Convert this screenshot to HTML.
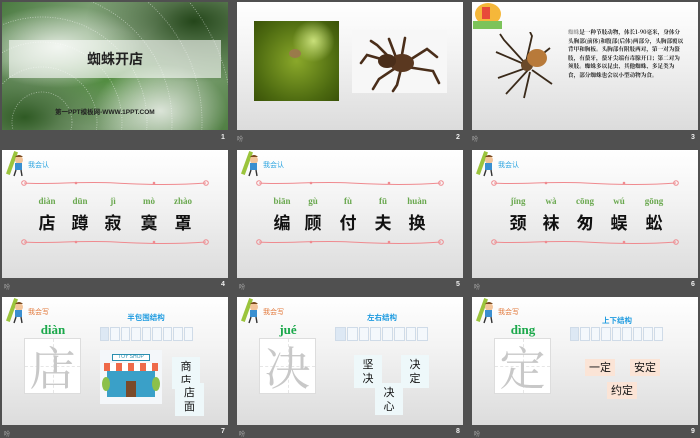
<!DOCTYPE html>
<html><head><meta charset="utf-8"><style>
*{margin:0;padding:0;box-sizing:border-box}
body{width:700px;height:438px;background:#505050;position:relative;overflow:hidden;font-family:"Liberation Sans","Noto Sans CJK SC",sans-serif}
.s{position:absolute;width:226px;height:128px;background:linear-gradient(#ffffff,#f3f3f3 40%,#dcdcdc);overflow:hidden}
.a{position:absolute}
.num{position:absolute;color:#eee;font-size:7px;font-weight:bold}
.cm{position:absolute;color:#aaa;font-size:6px}
.kid{position:absolute;left:3px;top:1px;width:20px;height:26px}
.lbl{position:absolute;left:26px;top:10px;font-size:7px;font-family:"Noto Sans CJK SC",sans-serif}
.py{position:absolute;top:46px;width:40px;margin-left:-20px;text-align:center;color:#6aa84f;font-size:9px;font-family:"Liberation Serif",serif;font-weight:bold}
.ch{position:absolute;top:59px;width:30px;margin-left:-15px;text-align:center;color:#111;font-size:17px;font-weight:bold;font-family:"Noto Sans CJK SC",sans-serif}
.wave{position:absolute;left:18px;width:190px;height:8px}
.grid{position:absolute;left:22px;top:41px;width:57px;height:56px;background:#fff;border:1px solid #ddd}
.grid:before{content:"";position:absolute;left:50%;top:0;bottom:0;border-left:1px dashed #e6e6e6}
.grid:after{content:"";position:absolute;top:50%;left:0;right:0;border-top:1px dashed #e6e6e6}
.gc{position:absolute;left:0;top:0;width:55px;height:54px;text-align:center;line-height:54px;font-size:46px;color:#c8c8c8;font-family:"Noto Serif CJK SC",serif;z-index:1}
.pyb{position:absolute;top:25px;width:60px;margin-left:-30px;text-align:center;color:#1aa84a;font-size:13px;font-family:"Liberation Serif",serif;font-weight:bold}
.tt{position:absolute;top:15px;width:70px;margin-left:-35px;text-align:center;color:#1e9be0;font-size:7.5px;font-weight:bold;font-family:"Noto Sans CJK SC",sans-serif}
.strip{position:absolute;left:98px;top:30px;width:93px;height:14px;display:flex;gap:1px}
.strip i{flex:1;background:#f4f8fc;border:1px solid #cfdbe8}
.strip i:first-child{background:#dde8f4}
.card{position:absolute;background:#eef8fa;font-size:11px;color:#111;text-align:center;line-height:14px;font-family:"Noto Sans CJK SC",sans-serif;padding-top:2px}
.pc{position:absolute;background:#fbe4d6;font-size:11px;color:#111;text-align:center;line-height:17px;font-family:"Noto Sans CJK SC",sans-serif;width:30px;height:17px}
</style></head><body>

<svg width="0" height="0" style="position:absolute"><defs>
<g id="wv"><path d="M4 4 C30 6 60 2 95 4 S160 6 186 4" stroke="#ef8a8f" stroke-width="1" fill="none"/><circle cx="4" cy="4" r="2.3" fill="none" stroke="#ef8a8f"/><circle cx="186" cy="4" r="2.3" fill="none" stroke="#ef8a8f"/><circle cx="56" cy="4" r="1.3" fill="#ef8a8f"/><circle cx="134" cy="4" r="1.3" fill="#ef8a8f"/></g>
<g id="kd"><rect x="5" y="0" width="4" height="24" transform="rotate(20 7 12)" fill="#9bc43c"/><circle cx="14" cy="9" r="4" fill="#f2c49a"/><path d="M10 6 q4 -4 8 0" fill="#7a4a1e"/><rect x="10" y="12" width="7" height="7" fill="#3a8fd0"/><path d="M11 19 l-2 6 M16 19 l1 6" stroke="#333" stroke-width="1.4"/></g>
</defs></svg>

<!-- Slide 1 -->
<div class="s" style="left:2px;top:2px;background:radial-gradient(ellipse at 25% 35%,#dfe8dc 0,transparent 35%),radial-gradient(ellipse at 70% 85%,#dbe4d8 0,transparent 30%),radial-gradient(ellipse at 85% 15%,#24461a 0,transparent 40%),radial-gradient(ellipse at 10% 90%,#2f5a24 0,transparent 35%),radial-gradient(ellipse at 45% 60%,#4e8a3c 0,transparent 45%),linear-gradient(135deg,#4a7a40,#a9c2a2 50%,#4f7e42)">
<svg class="a" style="left:0;top:0" width="226" height="128"><g fill="none" stroke="#fff" stroke-opacity=".5" stroke-width=".8" stroke-dasharray="1 1.5"><circle cx="40" cy="120" r="30"/><circle cx="40" cy="120" r="55"/><circle cx="40" cy="120" r="80"/><circle cx="40" cy="120" r="105"/><circle cx="40" cy="120" r="130"/><circle cx="40" cy="120" r="160"/><circle cx="40" cy="120" r="190"/></g></svg>
<div class="a" style="left:7px;top:38px;width:212px;height:38px;background:rgba(255,255,255,.6)"></div>
<div class="a" style="left:7px;top:47px;width:212px;text-align:center;font-size:14px;font-weight:bold;color:#222;font-family:'Noto Sans CJK SC',sans-serif">蜘蛛开店</div>
<div class="a" style="left:53px;top:104px;font-size:6.5px;font-weight:bold;color:#222">第一PPT模板网-WWW.1PPT.COM</div>
</div>
<div class="num" style="left:221px;top:134px">1</div>

<!-- Slide 2 -->
<div class="s" style="left:237px;top:2px">
<div class="a" style="left:17px;top:19px;width:85px;height:80px;background:radial-gradient(circle at 70% 25%,#c9e07a 0,transparent 25%),radial-gradient(circle at 50% 50%,#8aa82a,#4d6a10 70%,#3a5208)"></div>
<div class="a" style="left:52px;top:47px;width:12px;height:9px;border-radius:50%;background:#9a7a4a"></div>
<div class="a" style="left:115px;top:28px;width:95px;height:63px;background:#f7f7f7"></div>
<svg class="a" style="left:120px;top:33px" width="85" height="58"><g stroke="#4a2e1a" stroke-width="2.6" fill="none" stroke-linecap="round"><path d="M38 28 L10 20 L4 28"/><path d="M38 28 L20 10 L14 6"/><path d="M40 25 L32 4"/><path d="M44 25 L48 3"/><path d="M48 28 L70 14 L80 22"/><path d="M50 32 L76 36 L82 48"/><path d="M44 34 L40 50 L36 56"/><path d="M40 32 L22 44 L16 54"/></g><ellipse cx="45" cy="28" rx="12" ry="9" fill="#5a3820"/><ellipse cx="30" cy="26" rx="9" ry="7" fill="#4a2e1a"/></svg>
</div>
<div class="num" style="left:456px;top:134px">2</div>
<div class="cm" style="left:237px;top:134px">吩</div>

<!-- Slide 3 -->
<div class="s" style="left:472px;top:2px">
<div class="a" style="left:3px;top:1px;width:26px;height:22px;border-radius:50%;background:#f5b73a"></div>
<div class="a" style="left:10px;top:5px;width:8px;height:12px;background:#e84a3a"></div>
<div class="a" style="left:1px;top:19px;width:29px;height:8px;background:#7cc35a"></div>
<svg class="a" style="left:22px;top:30px" width="60" height="68"><g stroke="#3a2a1a" stroke-width="1.8" fill="none"><path d="M30 30 L10 8 L6 2"/><path d="M30 32 L2 20"/><path d="M32 30 L38 4 L36 0"/><path d="M36 32 L56 16"/><path d="M34 38 L12 62"/><path d="M32 36 L4 46"/><path d="M38 38 L58 52"/><path d="M36 40 L30 66"/></g><circle cx="33" cy="33" r="6" fill="#6a4a2a"/><ellipse cx="43" cy="26" rx="10" ry="9" fill="#b87a3a"/></svg>
<div class="a" style="left:96px;top:26px;width:116px;font-size:5.6px;line-height:8.6px;color:#222;font-weight:bold;font-family:'Noto Serif CJK SC',serif"><span style="color:#999">蜘蛛</span>是一种节肢动物，体长1-90毫米，身体分头胸部(前体)和腹部(后体)两部分，头胸部覆以背甲和胸板。头胸部有附肢两对，第一对为螯肢，有螯牙，螯牙尖端有毒腺开口；第二对为须肢。蜘蛛多以昆虫、其他蜘蛛、多足类为食，部分蜘蛛也会以小型动物为食。</div>
</div>
<div class="num" style="left:691px;top:134px">3</div>
<div class="cm" style="left:472px;top:134px">吩</div>

<!-- Slides 4-6 -->
<div class="s" style="left:2px;top:150px">
<svg class="kid" viewBox="0 0 20 26"><use href="#kd"/></svg><div class="lbl" style="color:#29a3e0">我会认</div>
<svg class="wave" style="top:29px" viewBox="0 0 190 8"><use href="#wv"/></svg>
<div class="py" style="left:45px">diàn</div><div class="py" style="left:78px">dūn</div><div class="py" style="left:111px">jì</div><div class="py" style="left:147px">mò</div><div class="py" style="left:181px">zhào</div>
<div class="ch" style="left:45px">店</div><div class="ch" style="left:78px">蹲</div><div class="ch" style="left:111px">寂</div><div class="ch" style="left:147px">寞</div><div class="ch" style="left:181px">罩</div>
<svg class="wave" style="top:88px" viewBox="0 0 190 8"><use href="#wv"/></svg>
</div>
<div class="num" style="left:221px;top:281px">4</div><div class="cm" style="left:4px;top:282px">吩</div>

<div class="s" style="left:237px;top:150px">
<svg class="kid" viewBox="0 0 20 26"><use href="#kd"/></svg><div class="lbl" style="color:#29a3e0">我会认</div>
<svg class="wave" style="top:29px" viewBox="0 0 190 8"><use href="#wv"/></svg>
<div class="py" style="left:45px">biān</div><div class="py" style="left:76px">gù</div><div class="py" style="left:111px">fù</div><div class="py" style="left:146px">fū</div><div class="py" style="left:180px">huàn</div>
<div class="ch" style="left:45px">编</div><div class="ch" style="left:76px">顾</div><div class="ch" style="left:111px">付</div><div class="ch" style="left:146px">夫</div><div class="ch" style="left:180px">换</div>
<svg class="wave" style="top:88px" viewBox="0 0 190 8"><use href="#wv"/></svg>
</div>
<div class="num" style="left:456px;top:281px">5</div><div class="cm" style="left:239px;top:282px">吩</div>

<div class="s" style="left:472px;top:150px">
<svg class="kid" viewBox="0 0 20 26"><use href="#kd"/></svg><div class="lbl" style="color:#29a3e0">我会认</div>
<svg class="wave" style="top:29px" viewBox="0 0 190 8"><use href="#wv"/></svg>
<div class="py" style="left:46px">jǐng</div><div class="py" style="left:79px">wà</div><div class="py" style="left:113px">cōng</div><div class="py" style="left:147px">wú</div><div class="py" style="left:182px">gōng</div>
<div class="ch" style="left:46px">颈</div><div class="ch" style="left:79px">袜</div><div class="ch" style="left:113px">匆</div><div class="ch" style="left:147px">蜈</div><div class="ch" style="left:182px">蚣</div>
<svg class="wave" style="top:88px" viewBox="0 0 190 8"><use href="#wv"/></svg>
</div>
<div class="num" style="left:691px;top:281px">6</div><div class="cm" style="left:474px;top:282px">吩</div>

<!-- Slide 7 -->
<div class="s" style="left:2px;top:297px">
<svg class="kid" viewBox="0 0 20 26"><use href="#kd"/></svg><div class="lbl" style="color:#e2783a">我会写</div>
<div class="pyb" style="left:51px">diàn</div>
<div class="grid"><div class="gc">店</div></div>
<div class="tt" style="left:144px">半包围结构</div>
<div class="strip"><i></i><i></i><i></i><i></i><i></i><i></i><i></i><i></i><i></i></div>
<div class="a" style="left:98px;top:53px;width:62px;height:54px;background:#f4f7fa"></div>
<div class="a" style="left:110px;top:57px;width:38px;height:7px;background:#fff;border:1px solid #2a8fb0;font-size:5px;line-height:5px;text-align:center;color:#2a8fb0">TOY SHOP</div>
<div class="a" style="left:102px;top:66px;width:54px;height:8px;background:repeating-linear-gradient(90deg,#ef6a4a 0 6px,#fff 6px 12px)"></div>
<div class="a" style="left:105px;top:74px;width:48px;height:26px;background:#3aa0c8"></div>
<div class="a" style="left:124px;top:84px;width:10px;height:16px;background:#7a4a2a"></div>
<div class="a" style="left:100px;top:80px;width:8px;height:14px;border-radius:50%;background:#8cc04a"></div>
<div class="a" style="left:150px;top:80px;width:8px;height:14px;border-radius:50%;background:#8cc04a"></div>
<div class="card" style="left:170px;top:60px;width:28px;height:32px">商<br>店</div>
<div class="card" style="left:173px;top:86px;width:29px;height:33px">店<br>面</div>
</div>
<div class="num" style="left:221px;top:428px">7</div><div class="cm" style="left:4px;top:429px">吩</div>

<!-- Slide 8 -->
<div class="s" style="left:237px;top:297px">
<svg class="kid" viewBox="0 0 20 26"><use href="#kd"/></svg><div class="lbl" style="color:#e2783a">我会写</div>
<div class="pyb" style="left:51px">jué</div>
<div class="grid"><div class="gc">决</div></div>
<div class="tt" style="left:145px">左右结构</div>
<div class="strip"><i></i><i></i><i></i><i></i><i></i><i></i><i></i><i></i></div>
<div class="card" style="left:117px;top:58px;width:28px;height:33px">坚<br>决</div>
<div class="card" style="left:138px;top:86px;width:28px;height:32px">决<br>心</div>
<div class="card" style="left:164px;top:58px;width:28px;height:33px">决<br>定</div>
</div>
<div class="num" style="left:456px;top:428px">8</div><div class="cm" style="left:239px;top:429px">吩</div>

<!-- Slide 9 -->
<div class="s" style="left:472px;top:297px">
<svg class="kid" viewBox="0 0 20 26"><use href="#kd"/></svg><div class="lbl" style="color:#e2783a">我会写</div>
<div class="pyb" style="left:51px">dìng</div>
<div class="grid"><div class="gc">定</div></div>
<div class="tt" style="left:145px;top:18px">上下结构</div>
<div class="strip"><i></i><i></i><i></i><i></i><i></i><i></i><i></i><i></i><i></i></div>
<div class="pc" style="left:113px;top:62px">一定</div>
<div class="pc" style="left:158px;top:62px">安定</div>
<div class="pc" style="left:135px;top:85px">约定</div>
</div>
<div class="num" style="left:691px;top:428px">9</div><div class="cm" style="left:474px;top:429px">吩</div>

</body></html>
